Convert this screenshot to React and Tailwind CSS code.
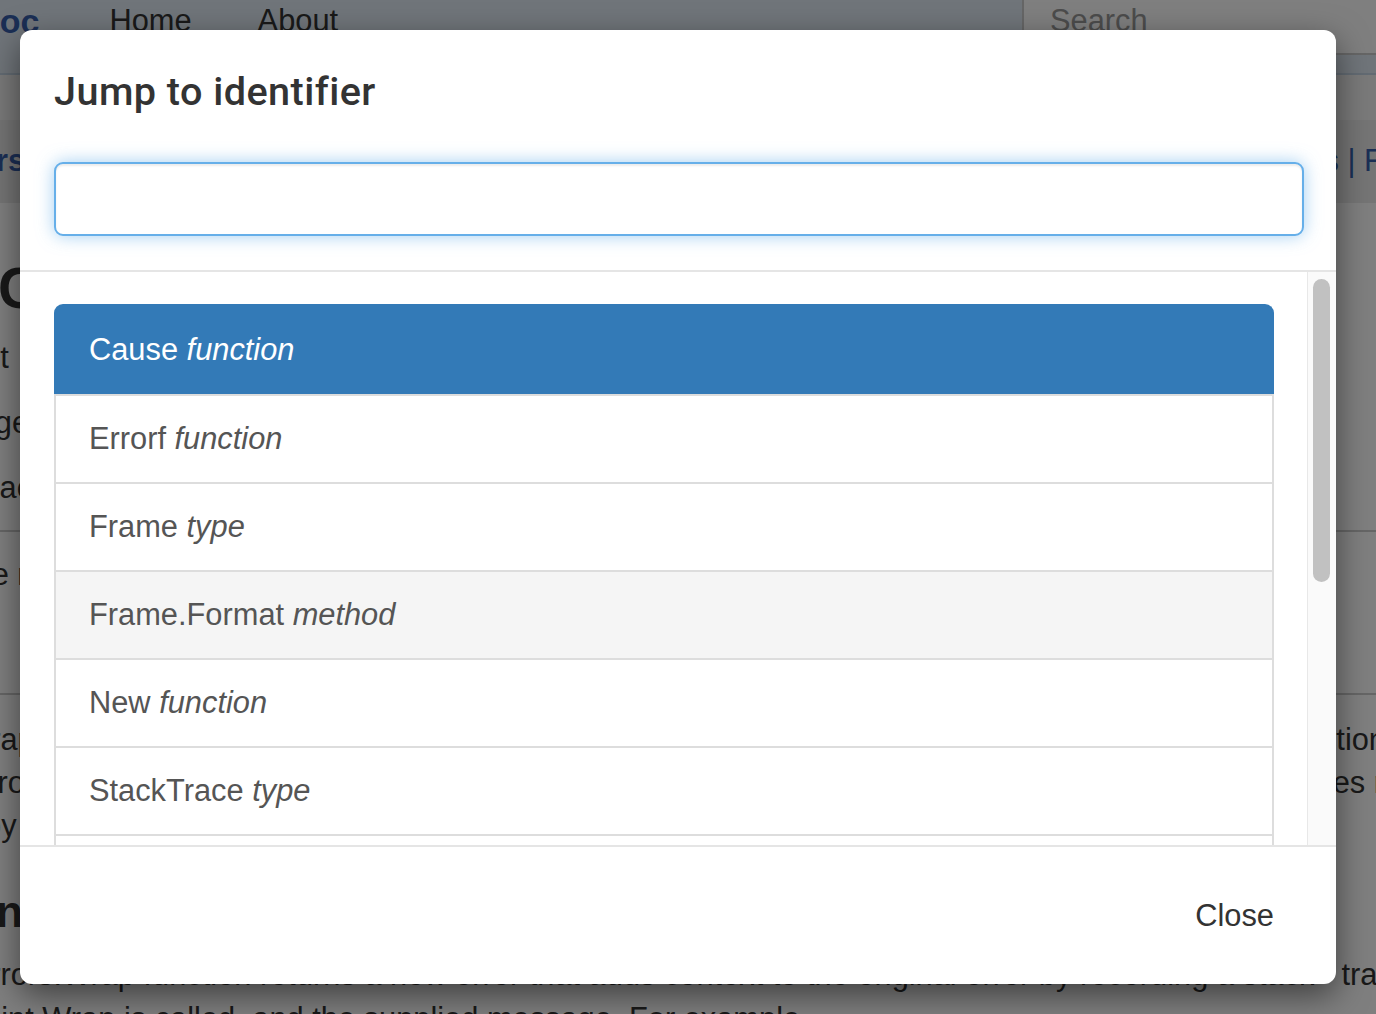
import { useState } from 'react';

const identifiers = [
  { name: 'Cause', kind: 'function' },
  { name: 'Errorf', kind: 'function' },
  { name: 'Frame', kind: 'type' },
  { name: 'Frame.Format', kind: 'method' },
  { name: 'New', kind: 'function' },
  { name: 'StackTrace', kind: 'type' },
  { name: 'StackTrace.Format', kind: 'method' },
  { name: 'WithMessage', kind: 'function' },
  { name: 'WithStack', kind: 'function' },
  { name: 'Wrap', kind: 'function' },
  { name: 'Wrapf', kind: 'function' },
];

// Page behind the modal, mostly hidden by the overlay
function BackgroundPage() {
  return (
    <div className="flex flex-col text-[30.8px] text-[#333]">
      {/* Navbar */}
      <nav className="flex h-[75px] items-start border-b-2 border-[#c6d6e6] bg-[#e0ebf5]">
        <span className="-ml-[72px] mt-[4px] text-[34px] font-bold leading-none text-[#375eab]">GoDoc</span>
        <span className="ml-[70px] mt-[6px] leading-none">Home</span>
        <span className="ml-[66px] mt-[6px] leading-none">About</span>
        <div className="ml-auto flex h-[55px] w-[354px] items-start border-b-2 border-l-2 border-[#ccc] bg-white pl-[26px] pt-[6px]">
          <span className="leading-none text-[#999]">Search</span>
        </div>
      </nav>
      <div className="h-[45px] bg-[#f5f5f5]" />
      <div className="flex h-[83px] items-center justify-between bg-[#ebebeb] whitespace-nowrap">
        <span className="-ml-[64px] font-bold text-[#375eab]">errors</span>
        <span className="-mr-[53px] text-[#375eab]">Index | Examples | Files</span>
      </div>

      <div className="h-[47px]" />
      <div className="flex h-[76px] items-center">
        <span className="-ml-[2px] text-[57px] font-bold leading-none">Contents</span>
      </div>
      <div className="flex h-[65px] items-center -ml-[34px]">
        <span>but</span>
      </div>
      <div className="flex h-[65px] items-center -ml-[60px]">
        <span>Usage</span>
      </div>
      <div className="flex h-[65px] items-center -ml-[21px]">
        <span>Package</span>
      </div>
      <div className="h-[9px]" />
      <div className="h-[2px] bg-[#ccc]" />
      <div className="flex h-[86px] items-center -ml-[34px]">
        <span>the reason</span>
      </div>
      <div className="h-[75px]" />
      <div className="h-[2px] bg-[#ccc]" />
      <div className="h-[24px]" />
      {[
        ['wrap', 'function'],
        ['error', 'frames r'],
        ['by', ''],
      ].map(([left, right], i) => (
        <div key={i} className="flex h-[43px] items-center justify-between whitespace-nowrap">
          <span className={i === 0 ? '-ml-[32px]' : i === 1 ? '-ml-[30px]' : '-ml-[16px]'}>{left}</span>
          <span className={i === 0 ? '-mr-[10px]' : '-mr-[8px]'}>{right}</span>
        </div>
      ))}
      <div className="flex h-[105px] items-center pt-[22px]">
        <span className="-ml-[4px] text-[44px] font-bold leading-none">n</span>
      </div>
      <div className="flex h-[44px] items-center justify-between whitespace-nowrap leading-[44px]">
        <span className="-ml-[27px]">errors.Wrap function returns a new error that adds context to the original error by recording a stack</span>
        <span className="-mr-[34px]">trace</span>
      </div>
      <div className="flex h-[44px] items-center whitespace-nowrap leading-[44px]">
        <span className="-ml-[33px]">point Wrap is called, and the supplied message. For example</span>
      </div>
    </div>
  );
}

function IdentifierRow({ item, index, hovered }) {
  const active = index === 0;
  if (active) {
    return (
      <div className="rounded-t-[9px] border-x-2 border-t-2 border-[#337ab7] bg-[#337ab7] px-[33px] py-[22px] leading-[44px] text-white">
        {item.name} <i>{item.kind}</i>
      </div>
    );
  }
  return (
    <div
      className={`border-x-2 border-t-2 border-[#ddd] px-[33px] py-[21px] leading-[44px] text-[#555] ${
        hovered ? 'bg-[#f5f5f5]' : 'bg-white'
      }`}
    >
      {item.name} <i>{item.kind}</i>
    </div>
  );
}

export default function App() {
  const [query, setQuery] = useState('');
  const hoverIndex = 3;

  return (
    <div className="relative h-[1014px] w-[1376px] overflow-hidden bg-white font-['Liberation_Sans',Arial,sans-serif]">
      <BackgroundPage />

      {/* Backdrop */}
      <div className="absolute inset-0 bg-black/50" />

      {/* Modal */}
      <div className="absolute inset-0 flex items-start pl-[20px] pt-[30px]">
        <div className="flex h-[954px] w-[1316px] flex-col overflow-hidden rounded-[12px] bg-white shadow-[0_11px_33px_rgba(0,0,0,0.5)]">
          <header className="flex flex-col border-b-2 border-[#e5e5e5] pb-[34px] pl-[34px] pr-[32px] pt-[42px]">
            <h4 className="h-[40px] font-['Roboto',Arial,sans-serif] text-[39.6px] font-medium leading-none tracking-[0.45px] text-[#333]">
              Jump to identifier
            </h4>
            <input
              value={query}
              onChange={(e) => setQuery(e.target.value)}
              className="mt-[50px] h-[74px] w-full rounded-[9px] border-2 border-[#66afe9] bg-white px-[26px] text-[30.8px] text-[#555] shadow-[inset_0_2px_2px_rgba(0,0,0,0.075),0_0_17px_rgba(102,175,233,0.6)] outline-none"
            />
          </header>

          <div className="flex h-[573px] shrink-0">
            <div className="flex-1 overflow-hidden pl-[34px] pr-[33px] pt-[32px] text-[30.8px]">
              {identifiers.map((item, i) => (
                <IdentifierRow key={item.name} item={item} index={i} hovered={i === hoverIndex} />
              ))}
            </div>
            {/* Scrollbar */}
            <div className="w-[29px] shrink-0 border-l border-[#e8e8e8] bg-[#fafafa] pl-[5px] pt-[7px]">
              <div className="h-[303px] w-[17px] rounded-full bg-[#c1c1c1]" />
            </div>
          </div>

          <footer className="flex flex-1 items-center justify-end border-t-2 border-[#e5e5e5] pr-[36px]">
            <button className="px-[26px] text-[30.8px] leading-[44px] text-[#333]">Close</button>
          </footer>
        </div>
      </div>
    </div>
  );
}
